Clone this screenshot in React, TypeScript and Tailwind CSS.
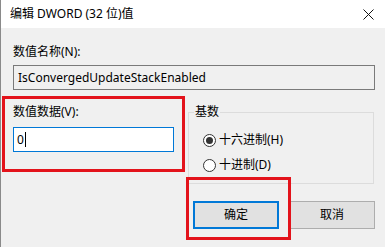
import React from "react";

function Radio({ checked, label }: { checked?: boolean; label: string }) {
  return (
    <div className="flex items-center h-[16px]">
      <div className="w-[13px] h-[13px] rounded-full border border-[#333] bg-white flex items-center justify-center">
        {checked && <div className="w-[7px] h-[7px] rounded-full bg-[#333]" />}
      </div>
      <span className="ml-[3px]">{label}</span>
    </div>
  );
}

export default function App() {
  return (
    <div
      className="relative w-[385px] h-[247px] bg-[#f0f0f0] border-l border-[#8a8a8a] text-[12px] leading-[16px] text-black overflow-hidden"
      style={{ fontFamily: '"Noto Sans", "Noto Sans CJK SC", sans-serif' }}
    >
      <div className="h-[28px] bg-white flex items-center justify-between pl-[9px] pr-[11px]">
        <span>编辑 DWORD (32 位)值</span>
        <svg width="11" height="11" viewBox="0 0 11 11" className="block">
          <path d="M0.5 0.5 L10.5 10.5 M10.5 0.5 L0.5 10.5" stroke="#111" strokeWidth="1" />
        </svg>
      </div>

      <div className="pl-[12px] pr-[9px]">
        <div className="mt-[16px]">数值名称(N):</div>
        <div className="mt-[5px] h-[25px] w-[362px] border border-[#7a7a7a] bg-[#f0f0f0] flex items-center pl-[4px]">
          IsConvergedUpdateStackEnabled
        </div>

        <div className="flex items-start">
          <div className="w-[161px] mt-[14px]">
            <div>数值数据(V):</div>
            <div className="mt-[7px] h-[25px] border border-[#0078d7] bg-white flex items-center pl-[3px]">
              <span>0</span>
              <span className="inline-block w-px h-[15px] bg-black ml-[1px]" />
            </div>
          </div>

          <fieldset className="ml-[14px] mt-[14px] w-[186px] h-[80px] border border-[#dcdcdc]">
            <legend className="ml-[5px] px-[1px] leading-[16px]">基数</legend>
            <div className="pl-[14px] pt-[12px] flex flex-col gap-[9px]">
              <Radio checked label="十六进制(H)" />
              <Radio label="十进制(D)" />
            </div>
          </fieldset>
        </div>

        <div className="flex justify-end gap-[10px] mt-[17px] pr-[1px]">
          <div className="w-[86px] h-[28px] bg-[#e1e1e1] border-2 border-[#0078d7] flex items-center justify-center">
            确定
          </div>
          <div className="w-[86px] h-[28px] bg-[#e1e1e1] border border-[#adadad] flex items-center justify-center">
            取消
          </div>
        </div>
      </div>

      <div className="absolute left-[1px] top-[96px] w-[183px] h-[76px] border-[3px] border-[#e3131b]" />
      <div className="absolute left-[185px] top-[177px] w-[105px] h-[63px] border-[3px] border-[#e3131b]" />
    </div>
  );
}
